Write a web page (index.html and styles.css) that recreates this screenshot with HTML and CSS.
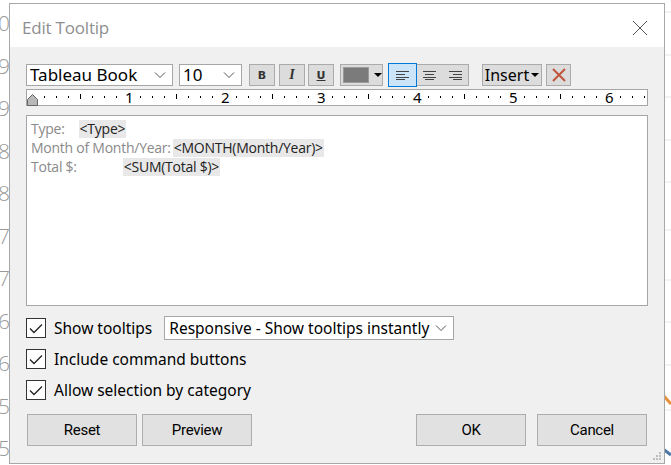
FILE: index.html
```html
<!DOCTYPE html>
<html>
<head>
<meta charset="utf-8">
<link rel="stylesheet" href="styles.css">
</head>
<body>
<div class="desktop">
  <div class="axis">
    <span>10</span><span>9</span><span>9</span><span>8</span><span>8</span><span>7</span><span>7</span><span>6</span><span>6</span><span>5</span><span>5</span>
  </div>
  <svg class="chart" width="671" height="465" viewBox="0 0 671 465">
    <line x1="660" y1="12" x2="671" y2="12" stroke="#e6e6e6"/>
    <line x1="660" y1="55" x2="671" y2="55" stroke="#e6e6e6"/>
    <line x1="660" y1="97" x2="671" y2="97" stroke="#e6e6e6"/>
    <line x1="660" y1="140" x2="671" y2="140" stroke="#e6e6e6"/>
    <line x1="660" y1="182" x2="671" y2="182" stroke="#e6e6e6"/>
    <line x1="660" y1="230" x2="671" y2="230" stroke="#e6e6e6"/>
    <line x1="660" y1="280" x2="671" y2="280" stroke="#e6e6e6"/>
    <line x1="660" y1="322" x2="671" y2="322" stroke="#e6e6e6"/>
    <line x1="660" y1="365" x2="671" y2="365" stroke="#e6e6e6"/>
    <line x1="660" y1="410" x2="671" y2="410" stroke="#e6e6e6"/>
    <line x1="663" y1="395" x2="671" y2="404" stroke="#e8903a" stroke-width="3"/>
    <line x1="663" y1="449" x2="671" y2="455" stroke="#4e79a7" stroke-width="3"/>
  </svg>

  <div class="dialog">
    <div class="titlebar">
      <span class="title">Edit Tooltip</span>
      <svg class="close" width="16" height="16" viewBox="0 0 16 16"><path d="M1 1L15 15M15 1L1 15" stroke="#555" stroke-width="1" fill="none"/></svg>
    </div>
    <div class="content">
      <div class="toolbar">
        <div class="combo font-combo"><span>Tableau Book</span><svg class="chev" width="12" height="8" viewBox="0 0 12 8"><path d="M1 1.5L6 6.5L11 1.5" stroke="#555" fill="none"/></svg></div>
        <div class="combo size-combo"><span>10</span><svg class="chev" width="12" height="8" viewBox="0 0 12 8"><path d="M1 1.5L6 6.5L11 1.5" stroke="#555" fill="none"/></svg></div>
        <div class="tbtn b">B</div>
        <div class="tbtn i">I</div>
        <div class="tbtn u">U</div>
        <div class="tbtn color"><span class="swatch"></span><span class="tri"></span></div>
        <div class="align-group">
          <div class="seg sel"><svg width="13" height="9" viewBox="0 0 13 9"><path d="M0 .5H13M0 3.5H9M0 6.5H13M0 8.5H9" stroke="#444"/></svg></div>
          <div class="seg"><svg width="13" height="9" viewBox="0 0 13 9"><path d="M0 .5H13M2 3.5H11M0 6.5H13M2 8.5H11" stroke="#444"/></svg></div>
          <div class="seg"><svg width="13" height="9" viewBox="0 0 13 9"><path d="M0 .5H13M4 3.5H13M0 6.5H13M4 8.5H13" stroke="#444"/></svg></div>
        </div>
        <div class="tbtn insert">Insert<span class="tri"></span></div>
        <div class="tbtn del"><svg width="16" height="16" viewBox="0 0 16 16"><path d="M2 2L14 14M14 2L2 14" stroke="#c0553d" stroke-width="2"/></svg></div>
      </div>

      <div class="ruler">
        <svg width="622" height="17" viewBox="0 0 622 17">
          <g id="ticks" stroke="#000">
          </g>
        </svg>
        <div class="ruler-nums">
          <span style="left:98px">1</span>
          <span style="left:194px">2</span>
          <span style="left:290px">3</span>
          <span style="left:386px">4</span>
          <span style="left:482px">5</span>
          <span style="left:578px">6</span>
        </div>
        <svg class="marker" width="11" height="12" viewBox="0 0 11 12"><path d="M.5 11.5V5.5L5.5 .5L10.5 5.5V11.5Z" fill="#b8b8b8" stroke="#666"/></svg>
      </div>

      <div class="editor">
        <div class="line"><span class="lbl">Type:</span><span class="gap1"></span><span class="field">&lt;Type&gt;</span></div>
        <div class="line"><span class="lbl">Month of Month/Year:</span><span class="field">&lt;MONTH(Month/Year)&gt;</span></div>
        <div class="line"><span class="lbl">Total $:</span><span class="gap3"></span><span class="field">&lt;SUM(Total $)&gt;</span></div>
      </div>

      <div class="options">
        <div class="opt">
          <span class="cb"><svg width="14" height="11" viewBox="0 0 14 11"><path d="M1 5.5L5 9.5L13 1.5" stroke="#222" stroke-width="1.3" fill="none"/></svg></span>
          <span class="opt-label">Show tooltips</span>
          <div class="combo mode-combo"><span>Responsive - Show tooltips instantly</span><svg class="chev" width="12" height="8" viewBox="0 0 12 8"><path d="M1 1.5L6 6.5L11 1.5" stroke="#555" fill="none"/></svg></div>
        </div>
        <div class="opt">
          <span class="cb"><svg width="14" height="11" viewBox="0 0 14 11"><path d="M1 5.5L5 9.5L13 1.5" stroke="#222" stroke-width="1.3" fill="none"/></svg></span>
          <span class="opt-label">Include command buttons</span>
        </div>
        <div class="opt">
          <span class="cb"><svg width="14" height="11" viewBox="0 0 14 11"><path d="M1 5.5L5 9.5L13 1.5" stroke="#222" stroke-width="1.3" fill="none"/></svg></span>
          <span class="opt-label">Allow selection by category</span>
        </div>
      </div>

      <div class="buttons">
        <div class="btn">Reset</div>
        <div class="btn">Preview</div>
        <div class="spacer"></div>
        <div class="btn">OK</div>
        <div class="btn cancel">Cancel</div>
      </div>
      <svg class="grip" width="10" height="10" viewBox="0 0 10 10" fill="#bdbdbd"><rect x="7" y="1" width="2" height="2"/><rect x="4" y="4" width="2" height="2"/><rect x="7" y="4" width="2" height="2"/><rect x="1" y="7" width="2" height="2"/><rect x="4" y="7" width="2" height="2"/><rect x="7" y="7" width="2" height="2"/></svg>
    </div>
  </div>
</div>
<script>
(function(){
  var g=document.getElementById('ticks');
  var ns='http://www.w3.org/2000/svg';
  for(var i=1;i<52;i++){
    var x=6+i*12;
    if(i%8===0) continue;
    var l=document.createElementNS(ns,'line');
    var big=(i%4===0);
    l.setAttribute('x1',x+0.5);l.setAttribute('x2',x+0.5);
    l.setAttribute('y1',big?5:7);l.setAttribute('y2',big?10:9);
    g.appendChild(l);
  }
})();
</script>
</body>
</html>
```

FILE: styles.css
```css
* { box-sizing: border-box; }
html, body { margin: 0; padding: 0; }
body {
  width: 671px;
  height: 465px;
  overflow: hidden;
  background: #fff;
  font-family: "Noto Sans", "Open Sans", sans-serif;
}
.desktop {
  position: relative;
  width: 671px;
  height: 465px;
}
.axis {
  display: flex;
  flex-direction: column;
  align-items: flex-end;
  width: 10px;
  padding-top: 2px;
  font-family: "Open Sans", sans-serif;
  font-size: 21px;
  font-weight: 300;
  color: #9a9a9a;
  line-height: 42.5px;
}
.chart { position: absolute; left: 0; top: 0; }

.dialog {
  position: absolute;
  left: 9px;
  top: 3px;
  width: 656px;
  height: 461px;
  border: 1px solid #a8a8a8;
  background: #f0f0f0;
  display: flex;
  flex-direction: column;
}
.titlebar {
  height: 43px;
  background: #fff;
  display: flex;
  align-items: center;
  padding-left: 12px;
  padding-right: 16px;
  justify-content: space-between;
}
.title {
  font-family: "Open Sans", sans-serif;
  font-size: 17px;
  color: #8f8f8f;
  letter-spacing: -0.2px;
  padding-top: 3px;
}
.close { margin-top: 4px; }

.content {
  position: relative;
  flex: 1;
  padding: 17px 15px 0 16px;
  display: flex;
  flex-direction: column;
}

.toolbar {
  display: flex;
  height: 22px;
  align-items: stretch;
}
.combo {
  background: #fff;
  border: 1px solid #a6a6a6;
  display: flex;
  align-items: center;
  justify-content: space-between;
  padding: 0 6px 0 3px;
  color: #000;
}
.font-combo { width: 147px; font-size: 17px; }
.size-combo { width: 63px; margin-left: 6px; font-size: 17px; }
.font-combo span, .size-combo span { line-height: 20px; }
.tbtn {
  background: #dcdcdc;
  border: 1px solid #ababab;
  display: flex;
  align-items: center;
  justify-content: center;
  width: 26px;
  font-size: 12px;
  color: #333;
}
.tbtn.b { margin-left: 7px; font-weight: bold; font-family: "DejaVu Sans", sans-serif; font-size: 11px; }
.tbtn.i { margin-left: 4px; font-style: italic; font-weight: bold; font-family: "Liberation Serif", serif; font-size: 14px; }
.tbtn.u { margin-left: 3px; text-decoration: underline; font-weight: bold; font-family: "DejaVu Sans", sans-serif; font-size: 11px; }
.tbtn.color { width: 43px; margin-left: 6px; justify-content: flex-start; padding-left: 2px; gap: 5px; }
.swatch { width: 27px; height: 16px; background: #7b7b7b; border: 1px solid #9a9a9a; }
.tri {
  width: 0; height: 0;
  border-left: 4px solid transparent;
  border-right: 4px solid transparent;
  border-top: 4px solid #000;
}
.align-group {
  display: flex;
  margin-left: 6px;
  border: 1px solid #ababab;
  background: #dcdcdc;
}
.seg {
  width: 26px;
  display: flex;
  align-items: center;
  justify-content: center;
}
.seg.sel {
  background: #cce4f7;
  outline: 1px solid #0078d7;
  margin: -1px 0 -1px -1px;
  width: 27px;
}
.tbtn.insert {
  width: 60px;
  margin-left: 13px;
  font-size: 16px;
  color: #000;
  gap: 2px;
  font-family: "Noto Sans", sans-serif;
}
.tbtn.del { width: 25px; margin-left: 4px; }

.ruler {
  position: relative;
  margin-top: 3px;
  width: 622px;
  height: 17px;
  background: #fff;
  border: 1px solid #a6a6a6;
}
.ruler svg:first-child { position: absolute; left: -1px; top: -1px; }
.ruler-nums span {
  position: absolute;
  top: -3px;
  font-size: 15px;
  font-family: "Noto Sans", sans-serif;
  color: #000;
  line-height: 20px;
}
.marker { position: absolute; left: 0px; top: 4px; }

.editor {
  margin-top: 9px;
  width: 622px;
  height: 191px;
  background: #fff;
  border: 1px solid #a6a6a6;
  padding: 3px 0 0 4px;
  font-family: "Open Sans", sans-serif;
  font-size: 14px;
  letter-spacing: -0.25px;
}
.line { display: flex; height: 19px; align-items: center; }
.lbl { color: #8a8a8a; }
.field { background: #e8e8e8; color: #222; padding: 0 1px; line-height: 18px; }
.gap1 { width: 14px; }
.lbl + .field { margin-left: 2px; }
.gap3 { width: 46px; }

.options {
  margin-top: 10px;
  display: flex;
  flex-direction: column;
}
.opt {
  display: flex;
  align-items: center;
  height: 24px;
  margin-bottom: 7px;
}
.cb {
  width: 20px;
  height: 20px;
  border: 1px solid #333;
  background: #fff;
  display: flex;
  align-items: center;
  justify-content: center;
}
.opt-label {
  margin-left: 8px;
  font-size: 15.5px;
  color: #000;
}
.mode-combo {
  margin-left: 12px;
  width: 290px;
  height: 24px;
  font-size: 15.5px;
  padding-left: 4px;
}

.buttons {
  margin-top: 5px;
  display: flex;
  gap: 5px;
  padding-left: 1px;
  padding-right: 2px;
}
.spacer { flex: 1; }
.btn {
  width: 110px;
  height: 32px;
  background: #e1e1e1;
  border: 1px solid #adadad;
  display: flex;
  align-items: center;
  justify-content: center;
  font-family: "Roboto", sans-serif;
  font-weight: 400;
  font-size: 15px;
  letter-spacing: -0.3px;
  color: #000;
}
.btn.cancel { margin-left: 6px; }
.grip { position: absolute; right: 2px; bottom: 2px; }
```
